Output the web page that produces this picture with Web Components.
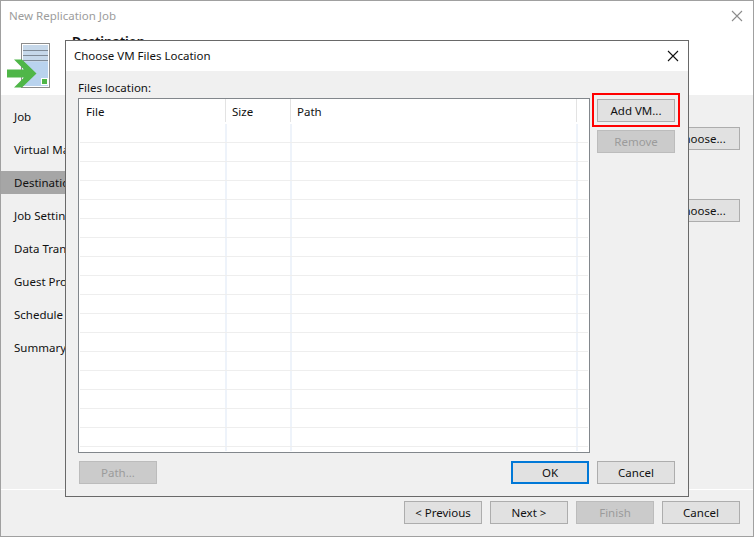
<!DOCTYPE html>
<html lang="en"><head><meta charset="utf-8"><title>New Replication Job</title>
<style>
html,body{margin:0;padding:0;width:754px;height:537px;overflow:hidden;background:#f0f0f0}
body{font:11.5px/16px "Noto Sans","Open Sans",sans-serif;color:#111}
</style></head><body>
<template id="t-btn"><style>
:host{display:block;box-sizing:border-box;width:78px;height:23px;background:#e1e1e1;border:1px solid #adadad;text-align:center;line-height:21px;color:#111;white-space:nowrap;overflow:hidden}
:host([disabled]){background:#cbcbcb;border-color:#bcbcbc;color:#9b9b9b}
:host([primary]){border:2px solid #0078d7;line-height:19px}
</style><slot></slot></template>

<template id="t-close"><style>
:host{display:block;width:12px;height:12px}
svg{display:block}
</style><svg width="12" height="12" viewBox="0 0 12 12"><path d="M1 1 11 11M11 1 1 11" stroke="currentColor" stroke-width="1.1" fill="none"/></svg></template>

<template id="t-step"><style>
:host{display:block;height:23px;margin-bottom:10px;padding-left:13px;line-height:23px;white-space:nowrap;overflow:hidden}
:host([active]){background:#a6a6a6}
</style><slot></slot></template>

<template id="t-grid"><style>
:host{display:flex;flex-direction:column;box-sizing:border-box;width:512px;height:355px;background:#fff;border:1px solid #82878c;overflow:hidden}
.head,.row{display:grid;grid-template-columns:147px 65px 286px 1fr}
.head{height:25px;flex:none}
.head div{padding:5px 0 0 6px;border-right:1px solid #e3e3e3;margin-bottom:2px}
.head div:first-child{padding-left:7px}
.head div:nth-child(4){border:0}
.row{height:19px;flex:none;box-sizing:border-box;position:relative}
.row div{border-right:2px solid #eef3fa;margin-right:-1px}
.row div:last-child{border:0}
.row::after{content:"";position:absolute;left:1px;right:1px;bottom:0;height:1px;background:#eeeeee}
.fill{flex:1;height:auto}
.fill::after{display:none}
.fill div{margin-bottom:1px}
</style><div class="head"><div>File</div><div>Size</div><div>Path</div><div></div></div><div id="rows" style="display:contents"></div></template>

<template id="t-dialog"><style>
:host{display:flex;flex-direction:column;box-sizing:border-box;position:absolute;left:64px;top:39px;width:624px;height:457px;background:#f0f0f0;border:1px solid #696969}
.title{display:flex;align-items:center;justify-content:space-between;height:30px;flex:none;background:#fff;padding:0 9px 0 8px;color:#111}
.body{flex:1;padding:9px 13px 13px 12px;display:flex;flex-direction:column}
.label{height:18px;flex:none;line-height:16px}
.main{display:flex;flex:none;gap:7px}
.side{display:flex;flex-direction:column;gap:8px;padding-top:1px;position:relative}
.foot{display:flex;gap:8px;margin-top:8px;padding-left:1px}
.push{flex:1}
.hl{position:absolute;left:-5px;top:-5px;width:88px;height:34px;box-sizing:border-box;border:2px solid #f00}
</style>
<div class="title"><span>Choose VM Files Location</span><x-close></x-close></div>
<div class="body">
<div class="label">Files location:</div>
<div class="main"><file-grid></file-grid>
<div class="side"><x-btn>Add VM...</x-btn><x-btn disabled>Remove</x-btn><div class="hl"></div></div></div>
<div class="foot"><x-btn disabled>Path...</x-btn><div class="push"></div><x-btn primary>OK</x-btn><x-btn>Cancel</x-btn></div>
</div></template>

<template id="t-icon"><style>:host{display:block;width:45px;height:50px;margin-top:12px}svg{display:block}</style>
<svg width="45" height="50" viewBox="0 0 45 50">
<rect x="14.500" y="0.500" width="28" height="44" fill="#fff" stroke="#8c8c8c"/>
<rect x="16" y="2" width="25" height="41" fill="#b9d3ee"/>
<rect x="16" y="2" width="25" height="17" fill="#c6d8ea"/>
<path d="M16 7.500H41M16 12.500H41M16 17.500H41" stroke="#7f8a96" stroke-width="1"/>
<rect x="34" y="35" width="7" height="7" fill="#fff"/>
<rect x="35" y="36" width="5" height="5" fill="#4fb648"/>
<path d="M0 26.500H17L7 16.500H15L29.500 30.500 15 44.500H7L17 34.500H0Z" fill="#4fb648"/>
</svg></template>

<template id="t-win"><style>
:host{display:flex;flex-direction:column;box-sizing:border-box;position:relative;width:754px;height:537px;background:#f0f0f0;border:1px solid #a0a0a0;overflow:hidden}
.head{height:94px;flex:none;background:#fff;position:relative;display:flex;flex-direction:column}
.tbar{display:flex;justify-content:space-between;align-items:center;height:30px;padding:0 10px 0 8px;color:#9c9c9c;flex:none}
.tbar x-close{color:#8c8c8c}
.band{display:flex;padding-left:6px;flex:1}
.band h1{font:bold 12.500px/16px "Noto Sans","Open Sans",sans-serif;margin:3px 0 0 20px;color:#111}
.mid{flex:1;display:flex;min-height:0}
.nav{width:106px;flex:none;padding-top:10px}
.content{flex:1;display:flex;flex-direction:column;align-items:flex-end;gap:49px;padding:32px 13px 0 0}
.foot{height:47px;flex:none;border-top:1px solid #fff;display:flex;justify-content:flex-end;gap:8px;padding:11px 13px 0 0;box-sizing:border-box}
.tick{position:absolute;right:-1px;width:1px;height:1px;background:#555}
</style>
<div class="head"><div class="tbar"><span>New Replication Job</span><x-close></x-close></div>
<div class="band"><wizard-icon></wizard-icon><h1>Destination</h1></div></div>
<div class="mid"><div class="nav">
<wizard-step>Job</wizard-step><wizard-step>Virtual Machines</wizard-step><wizard-step active>Destination</wizard-step><wizard-step>Job Settings</wizard-step><wizard-step>Data Transfer</wizard-step><wizard-step>Guest Processing</wizard-step><wizard-step>Schedule</wizard-step><wizard-step>Summary</wizard-step>
</div><div class="content"><x-btn>Choose...</x-btn><x-btn>Choose...</x-btn></div></div>
<div class="foot"><x-btn>&lt; Previous</x-btn><x-btn>Next &gt;</x-btn><x-btn disabled>Finish</x-btn><x-btn>Cancel</x-btn></div>
<modal-dialog></modal-dialog>
<i class="tick" style="top:86px"></i><i class="tick" style="top:106px"></i><i class="tick" style="top:126px"></i></template>

<wizard-window></wizard-window>
<script>
function def(name,id,init){customElements.define(name,class extends HTMLElement{constructor(){super();const r=this.attachShadow({mode:"open"});r.appendChild(document.getElementById(id).content.cloneNode(true));if(init)init(r);}});}
def("x-btn","t-btn");def("x-close","t-close");def("wizard-step","t-step");def("wizard-icon","t-icon");
def("file-grid","t-grid",r=>{const h=r.getElementById("rows");const mk=c=>{const d=document.createElement("div");d.className=c;for(let i=0;i<4;i++)d.appendChild(document.createElement("div"));return d;};for(let i=0;i<17;i++)h.appendChild(mk("row"));h.appendChild(mk("row fill"));});
def("modal-dialog","t-dialog");def("wizard-window","t-win");
</script>
</body></html>
